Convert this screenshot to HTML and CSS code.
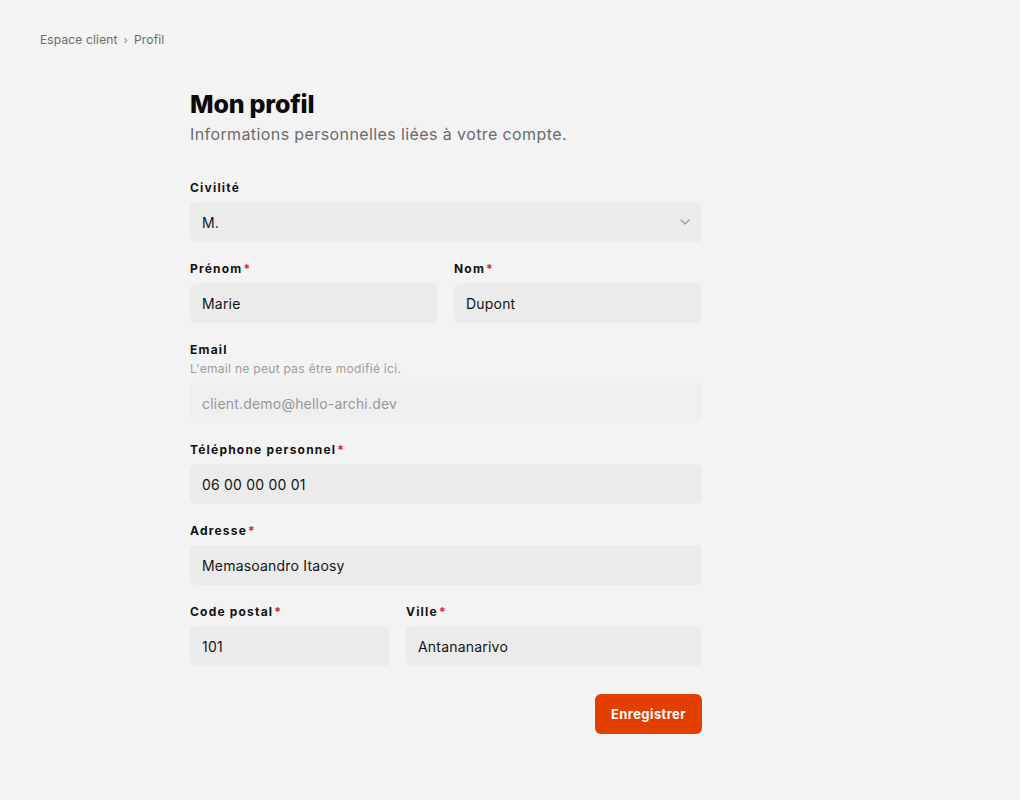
FILE: index.html
```html
<!DOCTYPE html>
<html lang="fr">
<head>
<meta charset="utf-8">
<title>Mon profil</title>
<link rel="stylesheet" href="styles.css">
</head>
<body>
<nav class="crumbs">
  <span>Espace client</span>
  <span class="sep">›</span>
  <span>Profil</span>
</nav>
<main class="page">
  <h1 class="title">Mon profil</h1>
  <p class="subtitle">Informations personnelles liées à votre compte.</p>
  <form class="form">
    <div class="field">
      <label class="label">Civilité</label>
      <div class="select">
        <span>M.</span>
        <svg class="chev" width="10" height="6" viewBox="0 0 10 6"><path d="M1 1l4 4 4-4" fill="none" stroke="#9a9a9a" stroke-width="1.2" stroke-linecap="round" stroke-linejoin="round"/></svg>
      </div>
    </div>
    <div class="row half">
      <div class="field">
        <label class="label">Prénom<span class="req">*</span></label>
        <div class="input">Marie</div>
      </div>
      <div class="field">
        <label class="label">Nom<span class="req">*</span></label>
        <div class="input">Dupont</div>
      </div>
    </div>
    <div class="field">
      <label class="label">Email</label>
      <div class="hint">L'email ne peut pas être modifié ici.</div>
      <div class="input disabled">client.demo@hello-archi.dev</div>
    </div>
    <div class="field">
      <label class="label">Téléphone personnel<span class="req">*</span></label>
      <div class="input">06 00 00 00 01</div>
    </div>
    <div class="field">
      <label class="label">Adresse<span class="req">*</span></label>
      <div class="input">Memasoandro Itaosy</div>
    </div>
    <div class="row city">
      <div class="field">
        <label class="label">Code postal<span class="req">*</span></label>
        <div class="input">101</div>
      </div>
      <div class="field">
        <label class="label">Ville<span class="req">*</span></label>
        <div class="input">Antananarivo</div>
      </div>
    </div>
    <div class="actions">
      <button type="button" class="btn">Enregistrer</button>
    </div>
  </form>
</main>
</body>
</html>
```
FILE: styles.css
```css
* { box-sizing: border-box; }
html, body { margin: 0; padding: 0; }
body {
  background: #f3f3f3;
  font-family: "Inter", "Liberation Sans", sans-serif;
  color: #111;
  width: 1020px;
  height: 800px;
}
.crumbs {
  padding: 31px 0 0 40px;
  font-size: 12px;
  line-height: 18px;
  color: #6b6b6b;
  letter-spacing: 0.15px;
  display: flex;
  gap: 6px;
}
.crumbs .sep { font-size: 11px; color: #888; }
.page {
  width: 512px;
  margin: 0 0 0 190px;
  padding-top: 39px;
}
.title {
  margin: 0;
  font-size: 25px;
  line-height: 32px;
  font-weight: 800;
  color: #0a0a0a;
  letter-spacing: -0.2px;
}
.subtitle {
  margin: 2px 0 0;
  font-size: 16px;
  line-height: 24px;
  color: #6b6b6b;
  letter-spacing: 0.4px;
}
.form {
  margin-top: 33px;
  display: flex;
  flex-direction: column;
  gap: 18px;
}
.field { display: flex; flex-direction: column; }
.label {
  font-size: 12px;
  line-height: 17px;
  font-weight: 700;
  letter-spacing: 1.2px;
  color: #111;
  margin-bottom: 6px;
}
.req { color: #e0202a; margin-left: 1px; }
.hint {
  font-size: 12px;
  line-height: 16px;
  color: #9c9c9c;
  letter-spacing: 0.3px;
  margin: -3px 0 6px;
}
.input, .select {
  height: 40px;
  background: #ebebeb;
  border-radius: 6px;
  padding: 0 12px;
  font-size: 14px;
  letter-spacing: 0.2px;
  color: #141414;
  display: flex;
  align-items: center;
}
.select { justify-content: space-between; padding-right: 12px; }
.input.disabled { color: #979797; background: #efefef; }
.row { display: grid; gap: 16px; }
.row.half { grid-template-columns: 1fr 1fr; }
.row.city { grid-template-columns: 200px 1fr; }
.actions {
  display: flex;
  justify-content: flex-end;
  margin-top: 10px;
}
.btn {
  height: 40px;
  width: 107px;
  padding: 0;
  border: none;
  border-radius: 6px;
  background: #e23e00;
  color: #fff;
  font-family: inherit;
  font-size: 13px;
  font-weight: 700;
  letter-spacing: 0.4px;
}
```
